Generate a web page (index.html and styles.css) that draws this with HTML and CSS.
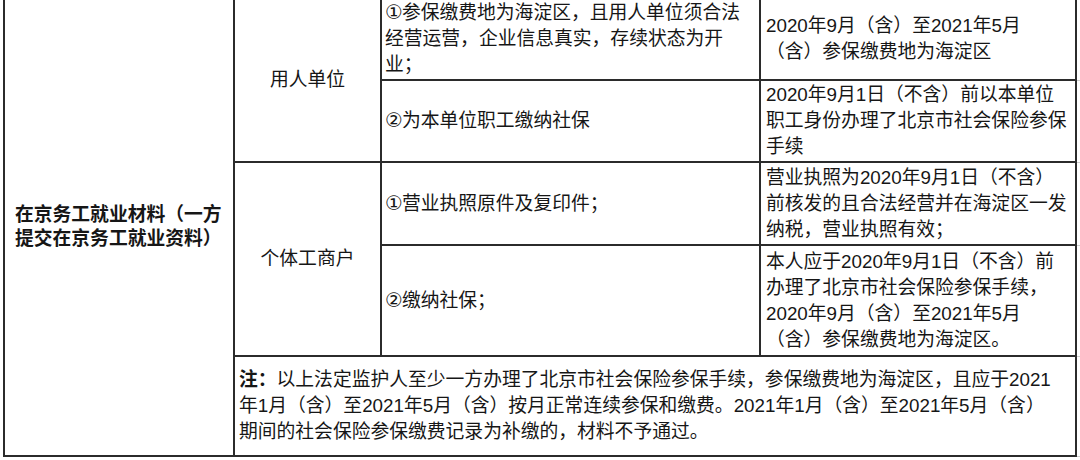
FILE: index.html
```html
<!DOCTYPE html>
<html lang="zh-CN">
<head>
<meta charset="utf-8">
<title>在京务工就业材料</title>
<link rel="stylesheet" href="styles.css">
</head>
<body>
<table class="grid">
  <colgroup>
    <col class="c1">
    <col class="c2">
    <col class="c3">
    <col class="c4">
    <col class="c5">
  </colgroup>
  <tbody>
    <tr class="r1">
      <td class="cat" rowspan="5">在京务工就业材料（一方<br>提交在京务工就业资料）</td>
      <td class="sub" rowspan="2">用人单位</td>
      <td class="req"><span class="num">①</span>参保缴费地为海淀区，且用人单位须合法<br>经营运营，企业信息真实，存续状态为开<br>业；</td>
      <td class="cond">2020年9月（含）至2021年5月<br>（含）参保缴费地为海淀区</td>
      <td class="edge"></td>
    </tr>
    <tr class="r2">
      <td class="req"><span class="num">②</span>为本单位职工缴纳社保</td>
      <td class="cond">2020年9月1日（不含）前以本单位<br>职工身份办理了北京市社会保险参保<br>手续</td>
      <td class="edge"></td>
    </tr>
    <tr class="r3">
      <td class="sub" rowspan="2">个体工商户</td>
      <td class="req"><span class="num">①</span>营业执照原件及复印件；</td>
      <td class="cond">营业执照为2020年9月1日（不含）<br>前核发的且合法经营并在海淀区一发<br>纳税，营业执照有效；</td>
      <td class="edge"></td>
    </tr>
    <tr class="r4">
      <td class="req"><span class="num">②</span>缴纳社保；</td>
      <td class="cond">本人应于2020年9月1日（不含）前<br>办理了北京市社会保险参保手续，<br>2020年9月（含）至2021年5月<br>（含）参保缴费地为海淀区。</td>
      <td class="edge"></td>
    </tr>
    <tr class="r5">
      <td class="note" colspan="3"><b>注：</b>以上法定监护人至少一方办理了北京市社会保险参保手续，参保缴费地为海淀区，且应于2021<br>年1月（含）至2021年5月（含）按月正常连续参保和缴费。2021年1月（含）至2021年5月（含）<br>期间的社会保险参保缴费记录为补缴的，材料不予通过。</td>
      <td class="edge"></td>
    </tr>
  </tbody>
</table>
</body>
</html>
```
FILE: styles.css
```css
html, body {
  margin: 0;
  padding: 0;
  background: #ffffff;
}

body {
  width: 1080px;
  height: 460px;
  overflow: hidden;
  font-family: "Liberation Sans", "Noto Sans CJK SC", sans-serif;
  font-size: 18.8px;
  line-height: 26px;
  color: #161616;
}

.grid {
  border-collapse: collapse;
  table-layout: fixed;
  width: 1076px;
  margin: -3px 0 0 3px;
}

.c1 { width: 230px; }
.c2 { width: 147px; }
.c3 { width: 379px; }
.c4 { width: 316px; }
.c5 { width: 4px; }

.grid td {
  border: 2px solid #2b2b2b;
  padding: 0 4px;
  vertical-align: middle;
  text-align: left;
  white-space: nowrap;
  overflow: hidden;
}

.r1 { height: 82px; }
.r2 { height: 82px; }
.r3 { height: 83px; }
.r4 { height: 111px; }
.r5 { height: 100px; }

.num {
  font-family: "DejaVu Sans", sans-serif;
  font-size: 20px;
  line-height: 1;
  letter-spacing: -1px;
}

.grid td.cat {
  font-weight: bold;
  padding-left: 10px;
  line-height: 24px;
}

.grid td.sub {
  text-align: center;
}

.grid td.req {
  padding-left: 3px;
}

.grid td.cond {
  padding-left: 5px;
}

.grid td.note {
  padding-left: 4px;
}

.grid td.edge {
  border: 1px solid #cfcfcf;
  padding: 0;
}
```
